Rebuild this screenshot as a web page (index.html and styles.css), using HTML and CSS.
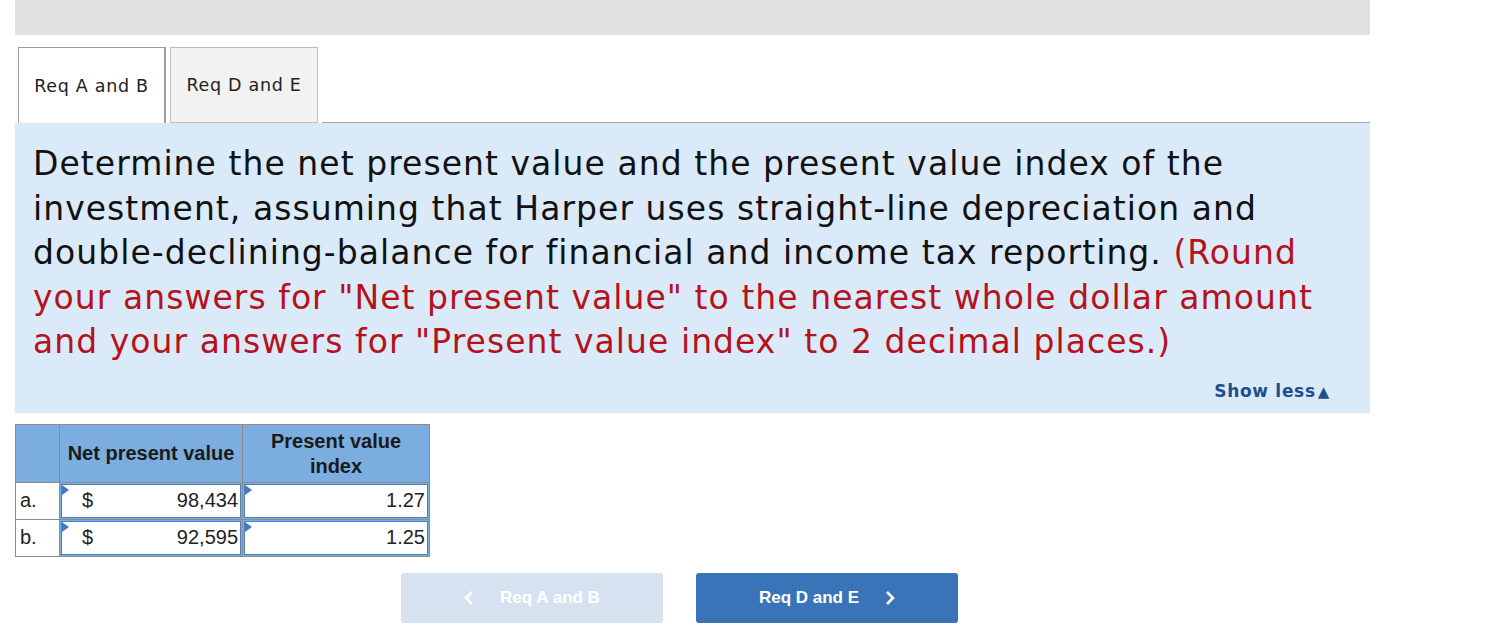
FILE: index.html
```html
<!DOCTYPE html>
<html>
<head>
<meta charset="utf-8">
<link rel="stylesheet" href="styles.css">
</head>
<body>
<div class="page">
  <div class="topbar"></div>
  <div class="tabs">
    <div class="tab active">Req A and B</div>
    <div class="tab">Req D and E</div>
    <div class="tab-rest"></div>
  </div>
  <div class="panel">
    <p class="question"><span>Determine the net present value and the present value index of the investment, assuming that Harper uses straight-line depreciation and double-declining-balance for financial and income tax reporting. </span><span class="red">(Round your answers for "Net present value" to the nearest whole dollar amount and your answers for "Present value index" to 2 decimal places.)</span></p>
    <div class="show-less">Show less<span class="tri">&#9650;</span></div>
  </div>
  <table class="grid">
    <tr class="head">
      <th class="lab"></th>
      <th class="c1">Net present value</th>
      <th class="c2">Present value<br>index</th>
    </tr>
    <tr>
      <td class="lab">a.</td>
      <td class="inp"><div class="box"><span class="flag"></span><span class="cur">$</span><span class="val">98,434</span></div></td>
      <td class="inp"><div class="box"><span class="flag"></span><span class="val">1.27</span></div></td>
    </tr>
    <tr>
      <td class="lab">b.</td>
      <td class="inp"><div class="box"><span class="flag"></span><span class="cur">$</span><span class="val">92,595</span></div></td>
      <td class="inp"><div class="box"><span class="flag"></span><span class="val">1.25</span></div></td>
    </tr>
  </table>
  <div class="nav">
    <div class="btn prev"><svg width="10" height="16" viewBox="0 0 10 16"><path d="M8 2 L2 8 L8 14" fill="none" stroke="#fff" stroke-width="2.6"/></svg><span>Req A and B</span></div>
    <div class="btn next"><span>Req D and E</span><svg width="10" height="16" viewBox="0 0 10 16"><path d="M2 2 L8 8 L2 14" fill="none" stroke="#fff" stroke-width="2.6"/></svg></div>
  </div>
</div>
</body>
</html>
```
FILE: styles.css
```css
html, body { margin: 0; padding: 0; background: #fff; }
.page { width: 1355px; margin-left: 15px; font-family: "DejaVu Sans", Verdana, sans-serif; }
.topbar { height: 35px; background: #e0e0e0; }
.tabs { display: flex; align-items: flex-end; margin-top: 12px; height: 76px; }
.tab {
  box-sizing: border-box; height: 76px; width: 148px; display: flex; align-items: center; justify-content: center;
  font-size: 17.5px; letter-spacing: 0.7px; color: #222; border: 1px solid #bdbdbd;
  background: #f2f2f2; margin-right: 4px; white-space: nowrap;
}
.tab.active { margin-left: 3px; background: #fff; border-color: #9e9e9e; border-width: 1px 2px 0 1px; }
.tab-rest { flex: 1; border-bottom: 1px solid #a8a8a8; height: 0; align-self: flex-end; }
.panel { background: #dbeaf8; padding: 19px 20px 12px 18px; height: 259px; }
.question { margin: 0; font-size: 33px; letter-spacing: 1.05px; line-height: 44.5px; color: #111; }
.red { color: #b5121b; }
.show-less { text-align: right; margin-top: 16px; margin-right: 20px; font-weight: bold; font-size: 17px; color: #1c4f8e; letter-spacing: 0.7px; }
.tri { font-size: 15px; margin-left: 2px; }
.grid { border-collapse: collapse; margin-top: 11px; font-family: "Liberation Sans", Arial, sans-serif; font-size: 20px; }
.grid th { background: #7badde; border: 1px solid #8c8c8c; font-weight: bold; color: #1a1a1a; height: 57px; padding: 0; line-height: 25px; }
.grid th.lab { width: 43px; }
.grid th.c1 { width: 182px; }
.grid th.c2 { width: 186px; }
.grid td { border: 1px solid #8c8c8c; height: 36px; padding: 0; line-height: 30px; }
.grid td.lab { padding-left: 4px; color: #222; vertical-align: top; padding-top: 2px; box-sizing: border-box; }
.grid td.inp { padding: 0; background: #7badde; }
.box { position: relative; height: 34px; margin: 1px; background: #fff; border: 1px solid #4a7fc1; display: flex; align-items: center; padding: 0 2px 3px 20px; box-sizing: border-box; color: #222; }
.box .val { margin-left: auto; }
.flag { position: absolute; left: 0; top: 0; width: 0; height: 0; border-top: 5px solid transparent; border-bottom: 5px solid transparent; border-left: 7px solid #3d7cc9; }
.nav { display: flex; gap: 33px; margin-top: 16px; margin-left: 386px; font-family: "Liberation Sans", Arial, sans-serif; }
.btn { width: 262px; height: 50px; border-radius: 3px; display: flex; align-items: center; justify-content: center; gap: 26px; color: #fff; font-size: 17px; font-weight: bold; }
.btn.prev { background: #d6e2f0; }
.btn.next { background: #3a74b8; }
```
